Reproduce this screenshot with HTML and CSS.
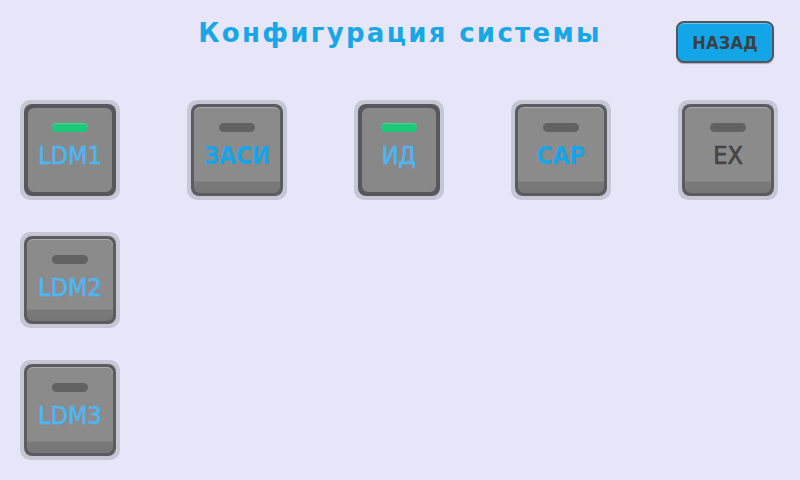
FILE: index.html
```html
<!DOCTYPE html>
<html lang="ru">
<head>
<meta charset="utf-8">
<title>Конфигурация системы</title>
<link rel="stylesheet" href="styles.css">
</head>
<body>
<div class="screen">
  <header class="header">
    <div class="spacer"></div>
    <h1 class="title">Конфигурация системы</h1>
    <div class="back-wrap"><button class="back">НАЗАД</button></div>
  </header>
  <main class="grid">
    <div class="halo"><div class="key pressed"><div class="face"><span class="led on"></span><span class="label light">LDM1</span></div></div></div>
    <div class="halo"><div class="key"><div class="face"><span class="led"></span><span class="label dark-blue">ЗАСИ</span></div></div></div>
    <div class="halo narrow"><div class="key pressed"><div class="face"><span class="led on"></span><span class="label light">ИД</span></div></div></div>
    <div class="halo"><div class="key"><div class="face"><span class="led"></span><span class="label dark-blue">CAP</span></div></div></div>
    <div class="halo"><div class="key"><div class="face"><span class="led"></span><span class="label grey">EX</span></div></div></div>
    <div class="halo"><div class="key"><div class="face"><span class="led"></span><span class="label light">LDM2</span></div></div></div>
    <div class="empty"></div><div class="empty"></div><div class="empty"></div><div class="empty"></div>
    <div class="halo"><div class="key"><div class="face"><span class="led"></span><span class="label light">LDM3</span></div></div></div>
  </main>
</div>
</body>
</html>
```
FILE: styles.css
```css
html, body {
  margin: 0;
  padding: 0;
}
body {
  background: #e6e6f8;
  width: 800px;
  height: 480px;
  overflow: hidden;
  font-family: "DejaVu Sans Condensed", "DejaVu Sans", sans-serif;
}
.screen {
  width: 800px;
  height: 480px;
}
.header {
  display: grid;
  grid-template-columns: 1fr auto 1fr;
  align-items: start;
  height: 100px;
}
.title {
  margin: 0;
  padding-top: 16px;
  font-size: 26px;
  line-height: 34px;
  font-weight: bold;
  letter-spacing: 2.3px;
  color: #18a6e6;
  font-family: "DejaVu Sans", sans-serif;
}
.back-wrap {
  display: flex;
  justify-content: flex-end;
  padding: 21px 26px 0 0;
}
.back {
  width: 98px;
  height: 42px;
  border: 2px solid #50565c;
  border-radius: 8px;
  background: #12a6e8;
  box-shadow: inset 0 1px 0 rgba(255,255,255,0.35), 0 1px 1px rgba(0,0,0,0.25);
  color: #3b4046;
  font-family: "DejaVu Sans Condensed", "DejaVu Sans", sans-serif;
  font-weight: bold;
  font-size: 18px;
  padding: 0;
  letter-spacing: 0.2px;
}
.grid {
  display: grid;
  grid-template-columns: 100px 100px 90px 100px 100px;
  grid-template-rows: 100px 96px 100px;
  column-gap: 67px;
  row-gap: 32px;
  padding-left: 20px;
}
.halo {
  background: #c6c6d6;
  border-radius: 10px;
  padding: 4px;
  box-sizing: border-box;
  display: flex;
}
.key {
  flex: 1;
  background: #5c5c60;
  border-radius: 8px;
  padding: 3px;
  display: flex;
}
.key.pressed {
  padding: 4px;
  background: #58585c;
}
.face {
  flex: 1;
  border-radius: 6px;
  background: linear-gradient(to bottom, #8b8b8b 0, #8b8b8b calc(100% - 12px), #7a7a7a calc(100% - 11px), #767676 100%);
  box-shadow: inset 0 1px 0 rgba(255,255,255,0.28);
  display: flex;
  flex-direction: column;
  align-items: center;
  padding-top: 16px;
  box-sizing: border-box;
}
.pressed .face {
  background: #888888;
  box-shadow: none;
  padding-top: 15px;
}
.led {
  display: block;
  width: 36px;
  height: 9px;
  border-radius: 5px;
  background: #626262;
}
.led.on {
  background: #1fc878;
  box-shadow: inset 0 1px 0 rgba(255,255,255,0.2);
}
.label {
  margin-top: 10px;
  font-family: "DejaVu Sans Condensed", "DejaVu Sans", sans-serif;
  font-size: 25px;
  line-height: 28px;
  -webkit-text-stroke: 0.6px currentColor;
}
.light { color: #4db6f2; }
.dark-blue {
  color: #17a4e8;
  font-weight: bold;
  font-size: 24px;
  -webkit-text-stroke: 0;
}
.grey { color: #424446; }
```
